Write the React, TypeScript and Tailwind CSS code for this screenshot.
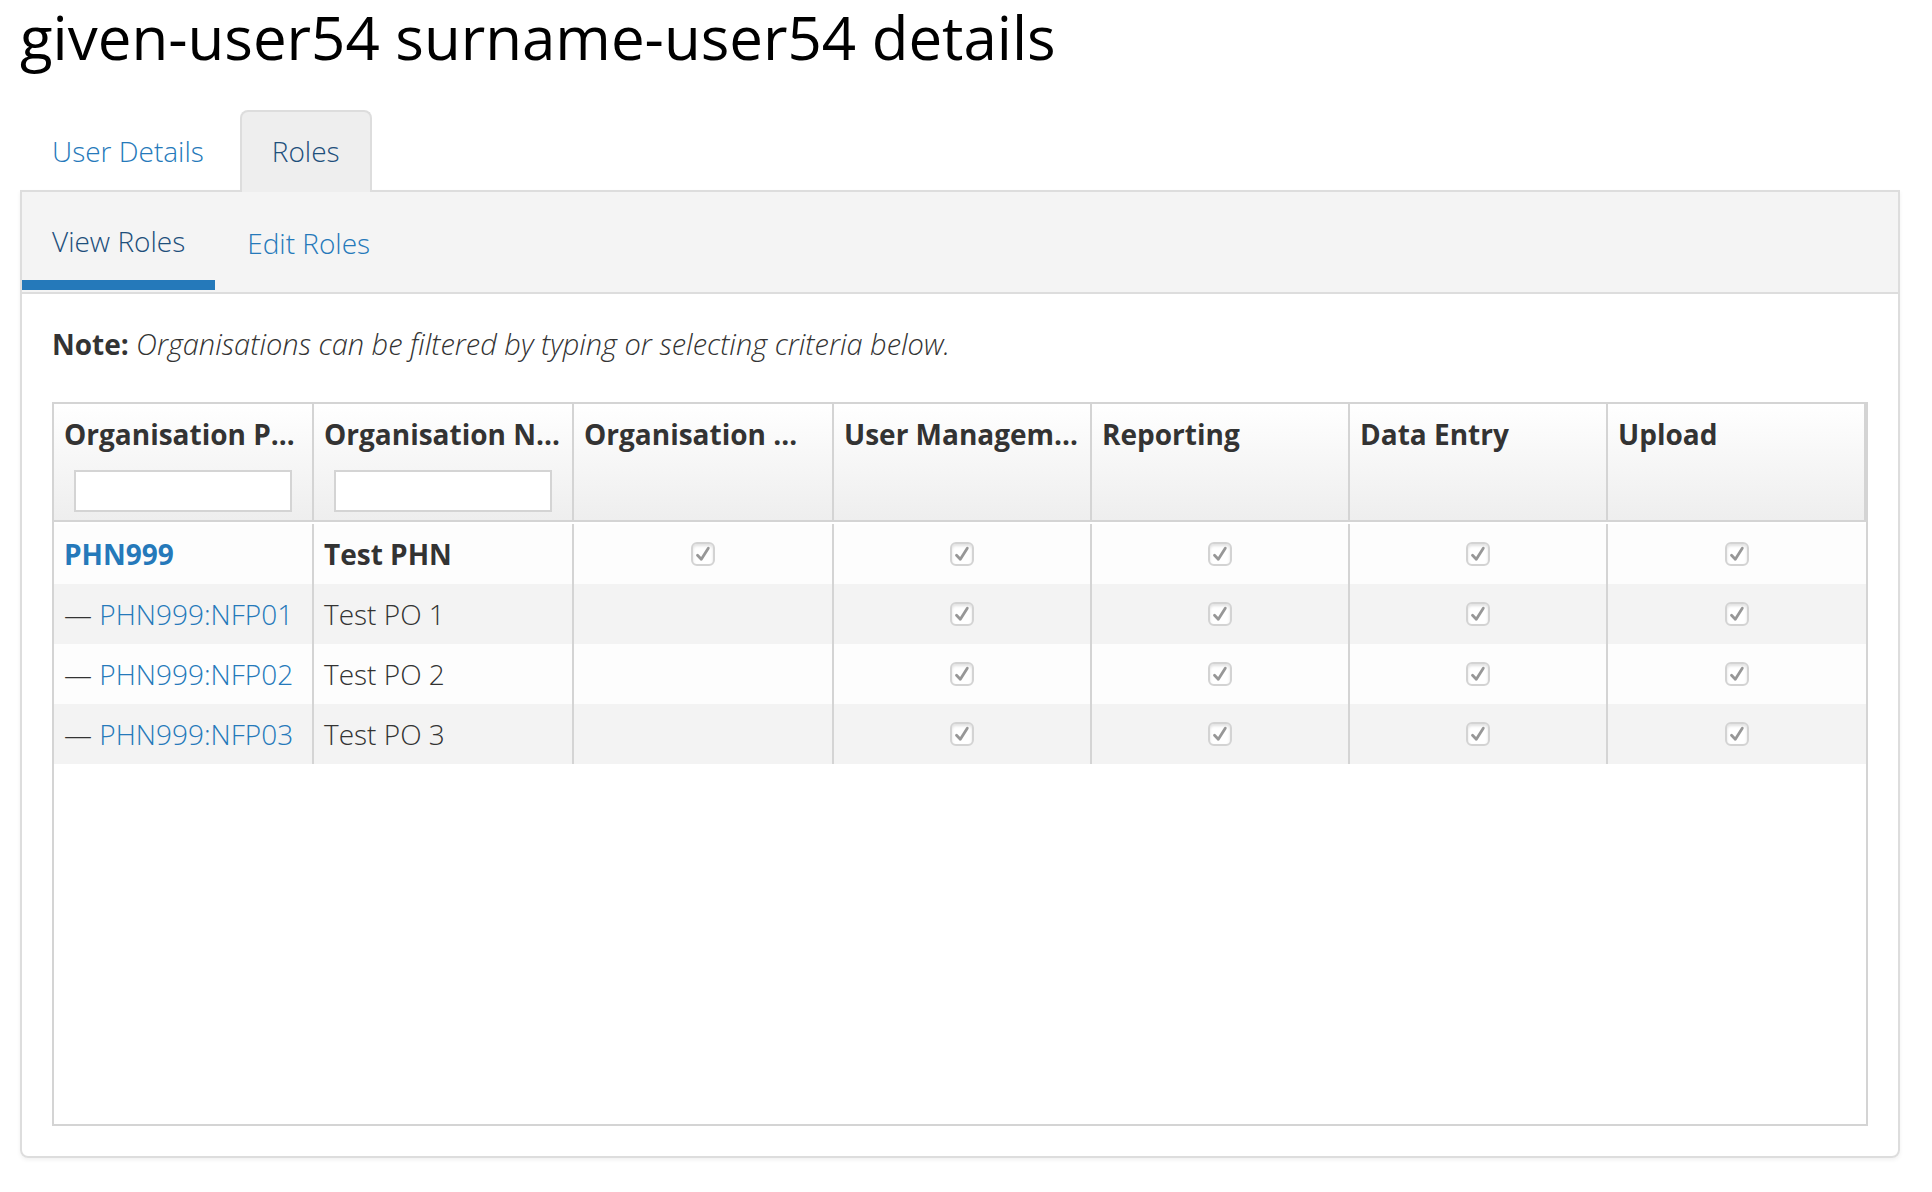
import React from "react";

type Row = {
  path: string;
  name: string;
  parent: boolean;
  roles: boolean[];
};

type Column = {
  title: string;
  filter: boolean;
};

const columns: Column[] = [
  { title: "Organisation Path", filter: true },
  { title: "Organisation Name", filter: true },
  { title: "Organisation Management", filter: false },
  { title: "User Management", filter: false },
  { title: "Reporting", filter: false },
  { title: "Data Entry", filter: false },
  { title: "Upload", filter: false },
];

const rows: Row[] = [
  { path: "PHN999", name: "Test PHN", parent: true, roles: [true, true, true, true, true] },
  { path: "PHN999:NFP01", name: "Test PO 1", parent: false, roles: [false, true, true, true, true] },
  { path: "PHN999:NFP02", name: "Test PO 2", parent: false, roles: [false, true, true, true, true] },
  { path: "PHN999:NFP03", name: "Test PO 3", parent: false, roles: [false, true, true, true, true] },
];

function RoleCheckbox({ label }: { label: string }) {
  return (
    <span className="mx-auto grid size-6">
      <input
        type="checkbox"
        checked
        disabled
        readOnly
        aria-label={label}
        className="col-start-1 row-start-1 size-6 appearance-none rounded-md border-2 border-[#d3d3d3] bg-white shadow-[inset_0_2px_3px_rgba(0,0,0,0.12)]"
      />
      <svg viewBox="0 0 24 24" className="pointer-events-none col-start-1 row-start-1 size-6" aria-hidden="true">
        <path d="M6.5 13.2 L10.3 17.2 L17.3 6.2" fill="none" stroke="#979797" strokeWidth="2.8" strokeLinecap="round" strokeLinejoin="round" />
      </svg>
    </span>
  );
}

function MainTabs() {
  return (
    <nav className="relative z-10 -mb-0.5 flex gap-1">
      <a href="#details" className="border-2 border-b-0 border-transparent px-[30px] pt-[19px] pb-[21px] text-[#2579ba]">
        User Details
      </a>
      <a
        href="#roles"
        aria-current="page"
        className="rounded-t-lg border-2 border-b-0 border-[#ddd] bg-[#eee] px-[30px] pt-[19px] pb-[21px] text-[#1d4f7b]"
      >
        Roles
      </a>
    </nav>
  );
}

function SubTabs() {
  return (
    <nav className="flex gap-0.5 border-b-2 border-[#ddd] bg-[#f4f4f4] pb-0.5">
      <a href="#view" aria-current="page" className="border-b-[10px] border-[#2579ba] px-[30px] pt-[29px] pb-[19px] text-[#1d4f7b]">
        View Roles
      </a>
      <a href="#edit" className="px-[30px] pt-[31px] text-[#2579ba]">
        Edit Roles
      </a>
    </nav>
  );
}

function RolesTable() {
  return (
    <div className="mt-[38px] min-h-[724px] border-2 border-[#d4d4d4]">
      <table className="w-full table-fixed border-separate border-spacing-0">
        <thead>
          <tr className="h-[118px]">
            {columns.map((column, index) => (
              <th
                key={column.title}
                scope="col"
                className={`border-r-2 border-b-2 border-[#d4d4d4] bg-linear-to-b from-white to-[#eee] px-2.5 pt-2.5 pb-2 text-left align-top font-bold ${index < 3 ? "w-[260px]" : ""}`}
              >
                <div className="truncate">{column.title}</div>
                {column.filter && (
                  <div className="mt-4 px-2.5">
                    <input
                      type="text"
                      aria-label={`Filter by ${column.title}`}
                      className="block h-[42px] w-full border-2 border-[#d4d4d4] bg-white px-2 text-[28px] font-normal"
                    />
                  </div>
                )}
              </th>
            ))}
          </tr>
          <tr aria-hidden="true">
            <td colSpan={7} className="h-0.5 p-0" />
          </tr>
        </thead>
        <tbody>
          {rows.map((row) => (
            <tr key={row.path} className="h-[60px] odd:bg-[#fdfdfd] even:bg-[#f3f3f3]">
              <td className="border-r-2 border-[#d4d4d4] px-2.5 py-0 whitespace-nowrap">
                {row.parent ? (
                  <a href={`#${row.path}`} className="font-bold text-[#2579ba]">
                    {row.path}
                  </a>
                ) : (
                  <>
                    —{" "}
                    <a href={`#${row.path}`} className="text-[#2579ba]">
                      {row.path}
                    </a>
                  </>
                )}
              </td>
              <td className={`border-r-2 border-[#d4d4d4] px-2.5 py-0 ${row.parent ? "font-bold" : ""}`}>{row.name}</td>
              {row.roles.map((granted, index) => (
                <td key={columns[index + 2].title} className="border-r-2 border-[#d4d4d4] p-0 last:border-r-0">
                  {granted && <RoleCheckbox label={`${row.path} ${columns[index + 2].title}`} />}
                </td>
              ))}
            </tr>
          ))}
        </tbody>
      </table>
    </div>
  );
}

export default function App() {
  return (
    <main className="min-h-screen bg-white px-5 pt-1 pr-8 font-['Open_Sans',sans-serif] text-[28px] leading-10 font-light text-[#333]">
      <h1 className="mb-10 text-[60px] leading-[66px] font-normal text-black">given-user54 surname-user54 details</h1>
      <MainTabs />
      <section className="rounded-b-lg border-2 border-[#ddd] shadow-[0_2px_4px_rgba(0,0,0,0.06)]">
        <SubTabs />
        <div className="p-[30px]">
          <p>
            <strong className="font-bold">Note:</strong>{" "}
            <em className="text-[29px]">Organisations can be filtered by typing or selecting criteria below.</em>
          </p>
          <RolesTable />
        </div>
      </section>
    </main>
  );
}
